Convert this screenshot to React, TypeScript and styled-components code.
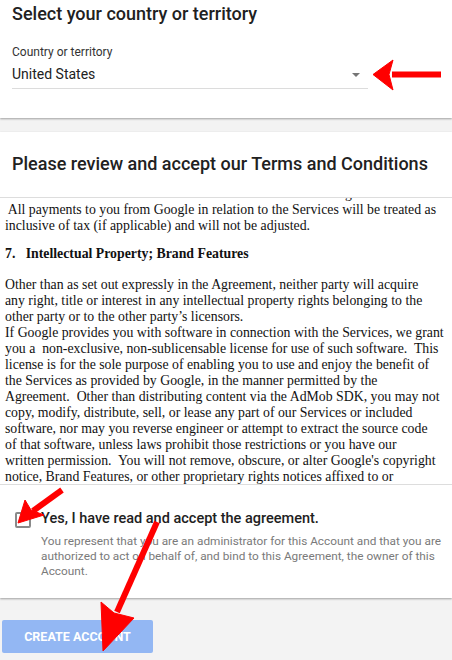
import styled, { createGlobalStyle } from "styled-components";

const Global = createGlobalStyle`
  html, body {
    margin: 0;
    padding: 0;
    background: #f3f3f3;
  }
  body {
    font-family: Roboto, "Liberation Sans", Arial, sans-serif;
    color: #212121;
  }
`;

const Page = styled.div`
  position: relative;
  width: 452px;
  height: 660px;
  overflow: hidden;
  background: #f3f3f3;
`;

const Card = styled.section`
  background: #fff;
  box-shadow: 0 1px 2px rgba(0, 0, 0, 0.35);
`;

const CountryCard = styled(Card)`
  height: 118px;
  padding: 0 12px;
  box-sizing: border-box;
`;

const Title = styled.h1`
  margin: 0;
  font-size: 18px;
  font-weight: 500;
  line-height: 24px;
  color: #212121;
`;

const CountryTitle = styled(Title)`
  padding-top: 2px;
`;

const Field = styled.div`
  width: 356px;
  margin-top: 19px;
  border-bottom: 1px solid #dcdcdc;
`;

const FieldLabel = styled.div`
  font-size: 12px;
  line-height: 14px;
  color: #333;
`;

const FieldRow = styled.div`
  display: flex;
  align-items: center;
  justify-content: space-between;
  height: 29px;
  font-size: 14px;
  color: #212121;
`;

const Caret = styled.span`
  width: 0;
  height: 0;
  margin: 2px 8px 0 0;
  border-left: 4px solid transparent;
  border-right: 4px solid transparent;
  border-top: 4px solid #757575;
`;

const TermsCard = styled(Card)`
  margin-top: 14px;
  height: 466px;
  display: flex;
  flex-direction: column;
`;

const TermsHeader = styled.div`
  height: 66px;
  padding: 20px 12px 0;
  box-sizing: border-box;
  border-bottom: 1px solid #dddddd;
`;

const Terms = styled.div`
  height: 287px;
  overflow: hidden;
  border-bottom: 1px solid #dddddd;
  padding-left: 5px;
  box-sizing: border-box;
  font-family: "Liberation Serif", "Times New Roman", serif;
  font-size: 13.8px;
  color: #111;
`;

const Line = styled.div<{ $bold?: boolean; $gap?: number; $indent?: number }>`
  white-space: pre;
  line-height: 16px;
  font-weight: ${(p) => (p.$bold ? 700 : 400)};
  margin-top: ${(p) => p.$gap ?? 0}px;
  padding-left: ${(p) => p.$indent ?? 0}px;
`;

const Agree = styled.div`
  display: flex;
  gap: 10px;
  padding: 24px 8px 0 15px;
`;

const Box = styled.span`
  flex: none;
  width: 12px;
  height: 12px;
  margin-top: 3px;
  border: 2px solid #8a8a8a;
  border-radius: 2px;
`;

const AgreeText = styled.div`
  display: flex;
  flex-direction: column;
  gap: 5px;
`;

const AgreeTitle = styled.div`
  font-size: 14.5px;
  font-weight: 500;
  line-height: 20px;
  color: #212121;
`;

const AgreeNote = styled.div`
  font-size: 11.8px;
  line-height: 15px;
  color: #7a7a7a;
  white-space: nowrap;
`;

const Footer = styled.div`
  padding: 22px 2px;
`;

const Button = styled.button`
  width: 151px;
  height: 33px;
  border: none;
  border-radius: 2px;
  background: #93b7f3;
  color: #fff;
  font-family: Roboto, "Liberation Sans", Arial, sans-serif;
  font-size: 12.5px;
  font-weight: 700;
  padding: 0;
`;

const Annotations = styled.svg`
  position: absolute;
  inset: 0;
  pointer-events: none;
`;

const termLines = [
  " All payments to you from Google in relation to the Services will be treated as",
  "inclusive of tax (if applicable) and will not be adjusted.",
];

const bodyLines = [
  "Other than as set out expressly in the Agreement, neither party will acquire",
  "any right, title or interest in any intellectual property rights belonging to the",
  "other party or to the other party\u2019s licensors.",
  "If Google provides you with software in connection with the Services, we grant",
  "you a  non-exclusive, non-sublicensable license for use of such software.  This",
  "license is for the sole purpose of enabling you to use and enjoy the benefit of",
  "the Services as provided by Google, in the manner permitted by the",
  "Agreement.  Other than distributing content via the AdMob SDK, you may not",
  "copy, modify, distribute, sell, or lease any part of our Services or included",
  "software, nor may you reverse engineer or attempt to extract the source code",
  "of that software, unless laws prohibit those restrictions or you have our",
  "written permission.  You will not remove, obscure, or alter Google's copyright",
  "notice, Brand Features, or other proprietary rights notices affixed to or",
];

export default function App() {
  return (
    <Page>
      <Global />
      <CountryCard>
        <CountryTitle>Select your country or territory</CountryTitle>
        <Field>
          <FieldLabel>Country or territory</FieldLabel>
          <FieldRow>
            United States
            <Caret />
          </FieldRow>
        </Field>
      </CountryCard>

      <TermsCard>
        <TermsHeader>
          <Title>Please review and accept our Terms and Conditions</Title>
        </TermsHeader>
        <Terms>
          <Line $gap={-12} $indent={340}>
            g
          </Line>
          {termLines.map((t) => (
            <Line key={t}>{t}</Line>
          ))}
          <Line $bold $gap={12}>
            {"7.   Intellectual Property; Brand Features"}
          </Line>
          {bodyLines.map((t, i) => (
            <Line key={t} $gap={i === 0 ? 15 : 0}>
              {t}
            </Line>
          ))}
        </Terms>
        <Agree>
          <Box />
          <AgreeText>
            <AgreeTitle>Yes, I have read and accept the agreement.</AgreeTitle>
            <AgreeNote>
              You represent that you are an administrator for this Account and that you are
              <br />
              authorized to act on behalf of, and bind to this Agreement, the owner of this
              <br />
              Account.
            </AgreeNote>
          </AgreeText>
        </Agree>
      </TermsCard>

      <Footer>
        <Button>CREATE ACCOUNT</Button>
      </Footer>

      <Annotations width="452" height="660" viewBox="0 0 452 660">
        <g fill="#ff0000" stroke="#ff0000" strokeLinejoin="round">
          <line x1="441" y1="74.5" x2="392" y2="74.5" strokeWidth="6" />
          <path d="M373 74.5 L393 60 L389 74.5 L393 90 Z" strokeWidth="1" />
          <line x1="62" y1="490" x2="33" y2="511" strokeWidth="6" />
          <path d="M18 523 L25 500 L31 510 L44 515 Z" strokeWidth="1" />
          <line x1="157" y1="522" x2="117" y2="612" strokeWidth="6" />
          <path d="M103 651 L101 602 L114 613 L134 618 Z" strokeWidth="1" />
        </g>
      </Annotations>
    </Page>
  );
}
